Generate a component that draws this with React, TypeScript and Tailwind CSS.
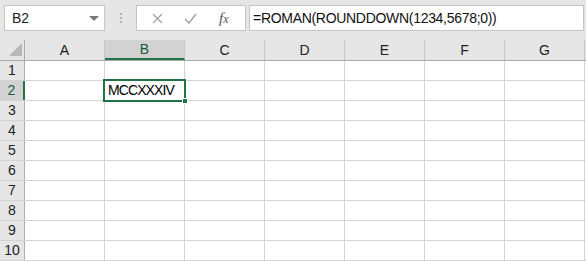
const COLS = ["A", "B", "C", "D", "E", "F", "G"];
const ROWS = [1, 2, 3, 4, 5, 6, 7, 8, 9, 10];

export default function App() {
  return (
    <div
      className="w-[586px] h-[261px] bg-[#e6e6e6] overflow-hidden relative text-[#222]"
      style={{ fontFamily: '"Liberation Sans", Arial, sans-serif' }}
    >
      {/* formula bar */}
      <div className="h-[40px] flex items-start pt-[5px] pl-[4px]">
        <div className="w-[101px] h-[26px] bg-white border border-[#c6c6c6] flex items-center justify-between pl-[7px] pr-[5px] text-[14px]">
          <span>B2</span>
          <span className="w-0 h-0 border-l-[5px] border-r-[5px] border-t-[5px] border-l-transparent border-r-transparent border-t-[#7a7a7a]" />
        </div>
        <div className="w-[31px] h-[26px] flex flex-col items-center justify-center gap-[2px]">
          <span className="w-[2px] h-[2px] bg-[#b0b0b0]" />
          <span className="w-[2px] h-[2px] bg-[#b0b0b0]" />
          <span className="w-[2px] h-[2px] bg-[#b0b0b0]" />
        </div>
        <div className="w-[110px] h-[26px] bg-white border border-[#c6c6c6] flex items-center">
          <svg className="ml-[15px]" width="11" height="11" viewBox="0 0 11 11">
            <path d="M1 1 L10 10 M10 1 L1 10" stroke="#a6a6a6" strokeWidth="1.4" />
          </svg>
          <svg className="ml-[21px]" width="13" height="11" viewBox="0 0 13 11">
            <path d="M1 6 L5 10 L12 1" stroke="#a6a6a6" strokeWidth="1.6" fill="none" />
          </svg>
          <span
            className="ml-[22px] text-[15px] italic text-[#555]"
            style={{ fontFamily: '"Liberation Serif", serif' }}
          >
            f<span className="text-[12px]">x</span>
          </span>
        </div>
        <div className="ml-[3px] w-[335px] h-[26px] bg-white border border-[#c6c6c6] flex items-center pl-[3px] text-[14px] tracking-[-0.3px] text-[#111]">
          =ROMAN(ROUNDDOWN(1234,5678;0))
        </div>
      </div>

      {/* grid */}
      <div className="bg-white">
        <div className="flex h-[21px] bg-[#e6e6e6] border-b border-[#ababab]">
          <div className="w-[25px] border-r border-[#ababab] relative">
            <svg className="absolute left-[9px] top-[3px]" width="13" height="13" viewBox="0 0 13 13">
              <path d="M13 0 L13 13 L0 13 Z" fill="#b7b7b7" />
            </svg>
          </div>
          {COLS.map((c) => (
            <div
              key={c}
              className={`w-[80px] flex items-center justify-center text-[14px] border-r border-[#c6c6c6] ${
                c === "B" ? "bg-[#d2d2d2] border-b-2 border-b-[#217346] text-[#1d5c38]" : ""
              }`}
            >
              {c}
            </div>
          ))}
        </div>
        {ROWS.map((r) => (
          <div key={r} className="flex h-[20px] border-b border-[#d4d4d4]">
            <div
              className={`w-[25px] flex items-center justify-center text-[14px] border-r ${
                r === 2
                  ? "bg-[#d2d2d2] border-r-2 border-r-[#217346] text-[#1d5c38]"
                  : "bg-[#e6e6e6] border-r-[#ababab]"
              }`}
            >
              {r}
            </div>
            {COLS.map((c) => (
              <div
                key={c}
                className="w-[80px] border-r border-[#d4d4d4] flex items-center pl-[3px] text-[14px] tracking-[-0.9px] text-black"
              >
                {r === 2 && c === "B" ? "MCCXXXIV" : ""}
              </div>
            ))}
          </div>
        ))}
      </div>

      {/* selection */}
      <div className="absolute left-[103px] top-[79px] w-[83px] h-[23px] border-2 border-[#217346]" />
      <div className="absolute left-[182px] top-[98px] w-[6px] h-[6px] bg-[#217346] border border-white" />
    </div>
  );
}
